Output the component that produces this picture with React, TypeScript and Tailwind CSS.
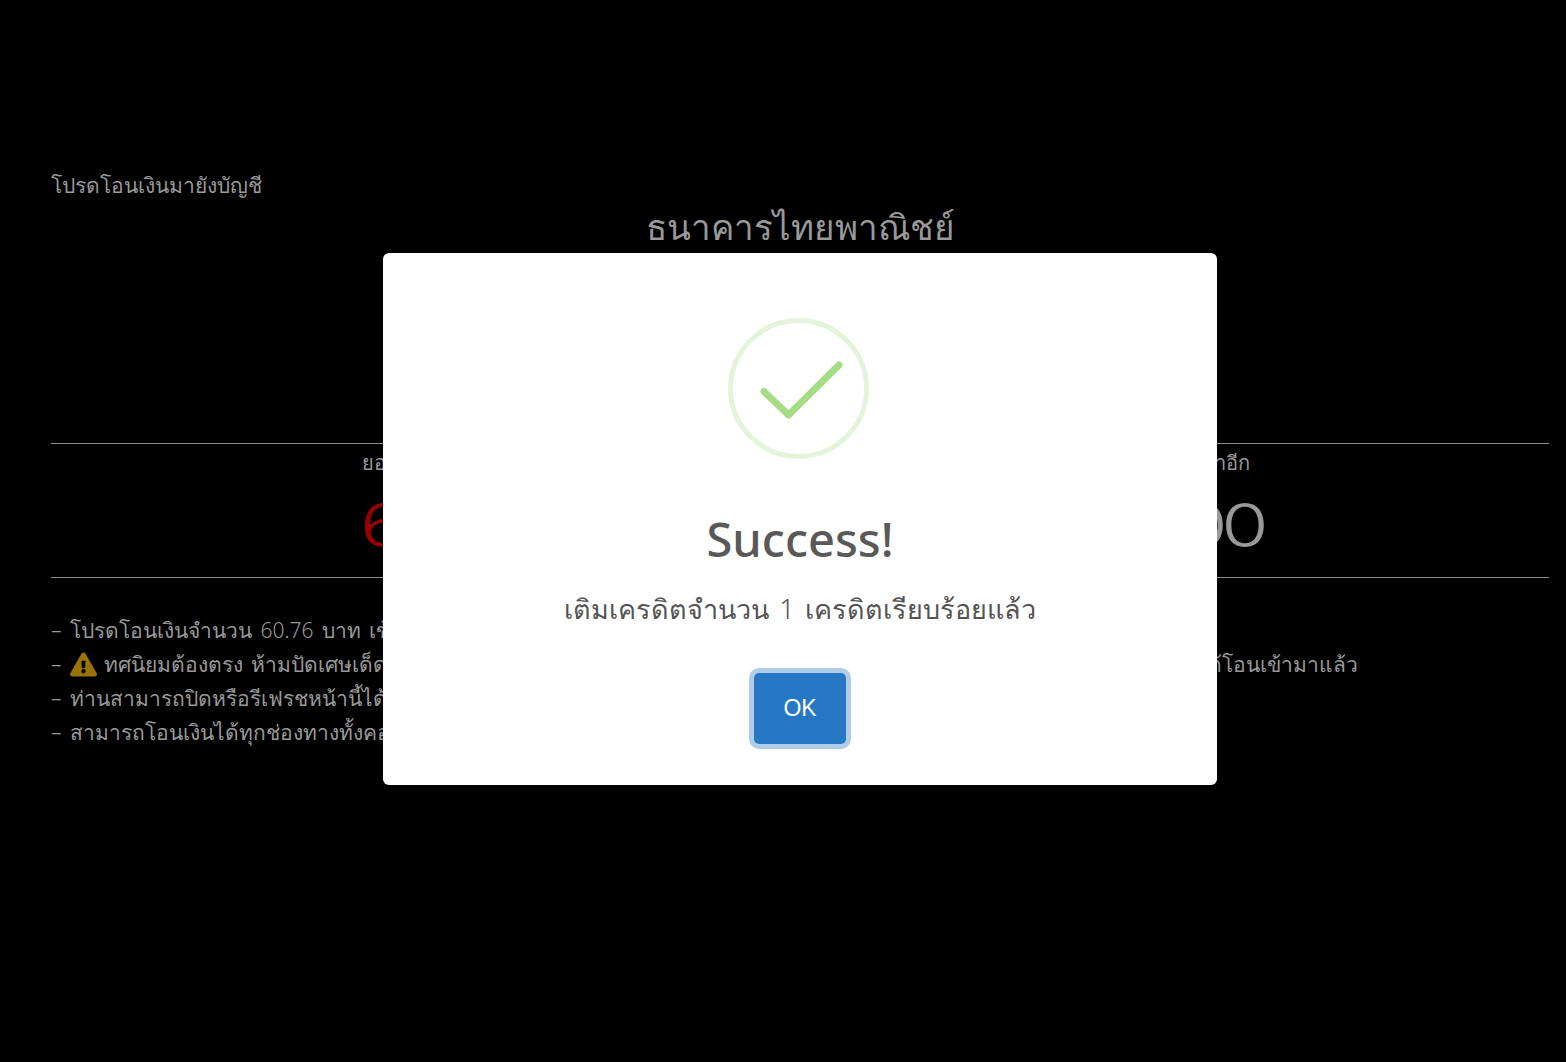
import { FaExclamationTriangle } from 'react-icons/fa';

const font = "font-['Noto_Sans','Open_Sans',sans-serif]";

function SuccessIcon() {
  return (
    <svg className="-ml-[3px]" width="141" height="141" viewBox="0 0 141 141" fill="none">
      <circle cx="70.5" cy="70.5" r="68" stroke="#a5dc86" strokeOpacity="0.3" strokeWidth="5" />
      <path d="M36 73.5 L60.5 97 L111 47" stroke="#a5dc86" strokeWidth="7" strokeLinecap="round" strokeLinejoin="round" />
    </svg>
  );
}

function Line({ children }: { children: React.ReactNode }) {
  return (
    <li className="flex items-center gap-[9px] whitespace-nowrap">
      <span className="w-[10px] overflow-hidden">–</span>
      {children}
    </li>
  );
}

export default function App() {
  return (
    <div className={`relative h-[1062px] w-full overflow-hidden bg-black ${font}`}>
      {/* page behind the dialog */}
      <div className="pl-[51px] pr-[17px] pt-[170px] text-[#999999]">
        <p className="text-[21px] leading-[30px] font-light">โปรดโอนเงินมายังบัญชี</p>
        <h2 className="text-center text-[35px] leading-[54px] font-light">ธนาคารไทยพาณิชย์</h2>
        <div className="h-[189px]" />
        <div className="grid h-[135px] grid-cols-2 border-y border-[#8c8c8c] text-center">
          <div>
            <p className="mt-[4px] pr-[6px] text-[20px] leading-[30px] font-light">ยอดที่ต้องโอน</p>
            <p className="mt-[2px] pl-[70px] font-['Inter',sans-serif] text-[60px] leading-[90px] font-light text-[#990000]">
              <span className="inline-block scale-x-[1.28]">60.76</span>
            </p>
          </div>
          <div>
            <p className="mt-[4px] pr-[12px] text-[20px] leading-[30px] font-light">โอนภายในเวลาอีก</p>
            <p className="mt-[2px] pl-[12px] font-['Inter',sans-serif] text-[60px] leading-[90px] font-light tracking-[-5px]">
              <span className="inline-block scale-x-[1.28]">14:00</span>
            </p>
          </div>
        </div>
        <ul className="mt-[35px] text-[21px] leading-[34px] font-light [word-spacing:3px]">
          <Line>โปรดโอนเงินจำนวน 60.76 บาท เข้าบัญชีด้านบนภายในเวลาที่กำหนด</Line>
          <Line>
            <FaExclamationTriangle className="text-[#997404]" size={27} />
            <span className="-ml-[2px]">ทศนิยมต้องตรง ห้ามปัดเศษเด็ดขาด มิฉะนั้นระบบจะไม่สามารถตรวจสอบยอดเงินที่ท่านได้โอนเข้ามาแล้ว ตรวจสอบ เงินที่ได้โอนเข้ามาแล้ว</span>
          </Line>
          <Line>ท่านสามารถปิดหรือรีเฟรชหน้านี้ได้ ระบบจะเติมเครดิตให้อัตโนมัติ</Line>
          <Line>สามารถโอนเงินได้ทุกช่องทางทั้งคอมพิวเตอร์และมือถือ</Line>
        </ul>
      </div>

      {/* dialog */}
      <div className="absolute inset-0 flex items-center justify-center pl-[34px] pb-[24px]">
        <div className="flex h-[532px] w-[834px] flex-col items-center rounded-[6px] bg-white pt-[65px]">
          <SuccessIcon />
          <h2 className="mt-[47px] text-[47px] leading-[66px] font-medium text-[#595959]">Success!</h2>
          <p className="mt-[17px] text-[27px] leading-[40px] font-light text-[#545454] [word-spacing:3px]">เติมเครดิตจำนวน 1 เครดิตเรียบร้อยแล้ว</p>
          <button className="mt-[44px] h-[71px] w-[92px] rounded-[5px] bg-[#2778c4] font-['Liberation_Sans',sans-serif] text-[23px] text-white ring-[5px] ring-[#afcde8]">
            OK
          </button>
        </div>
      </div>
    </div>
  );
}
